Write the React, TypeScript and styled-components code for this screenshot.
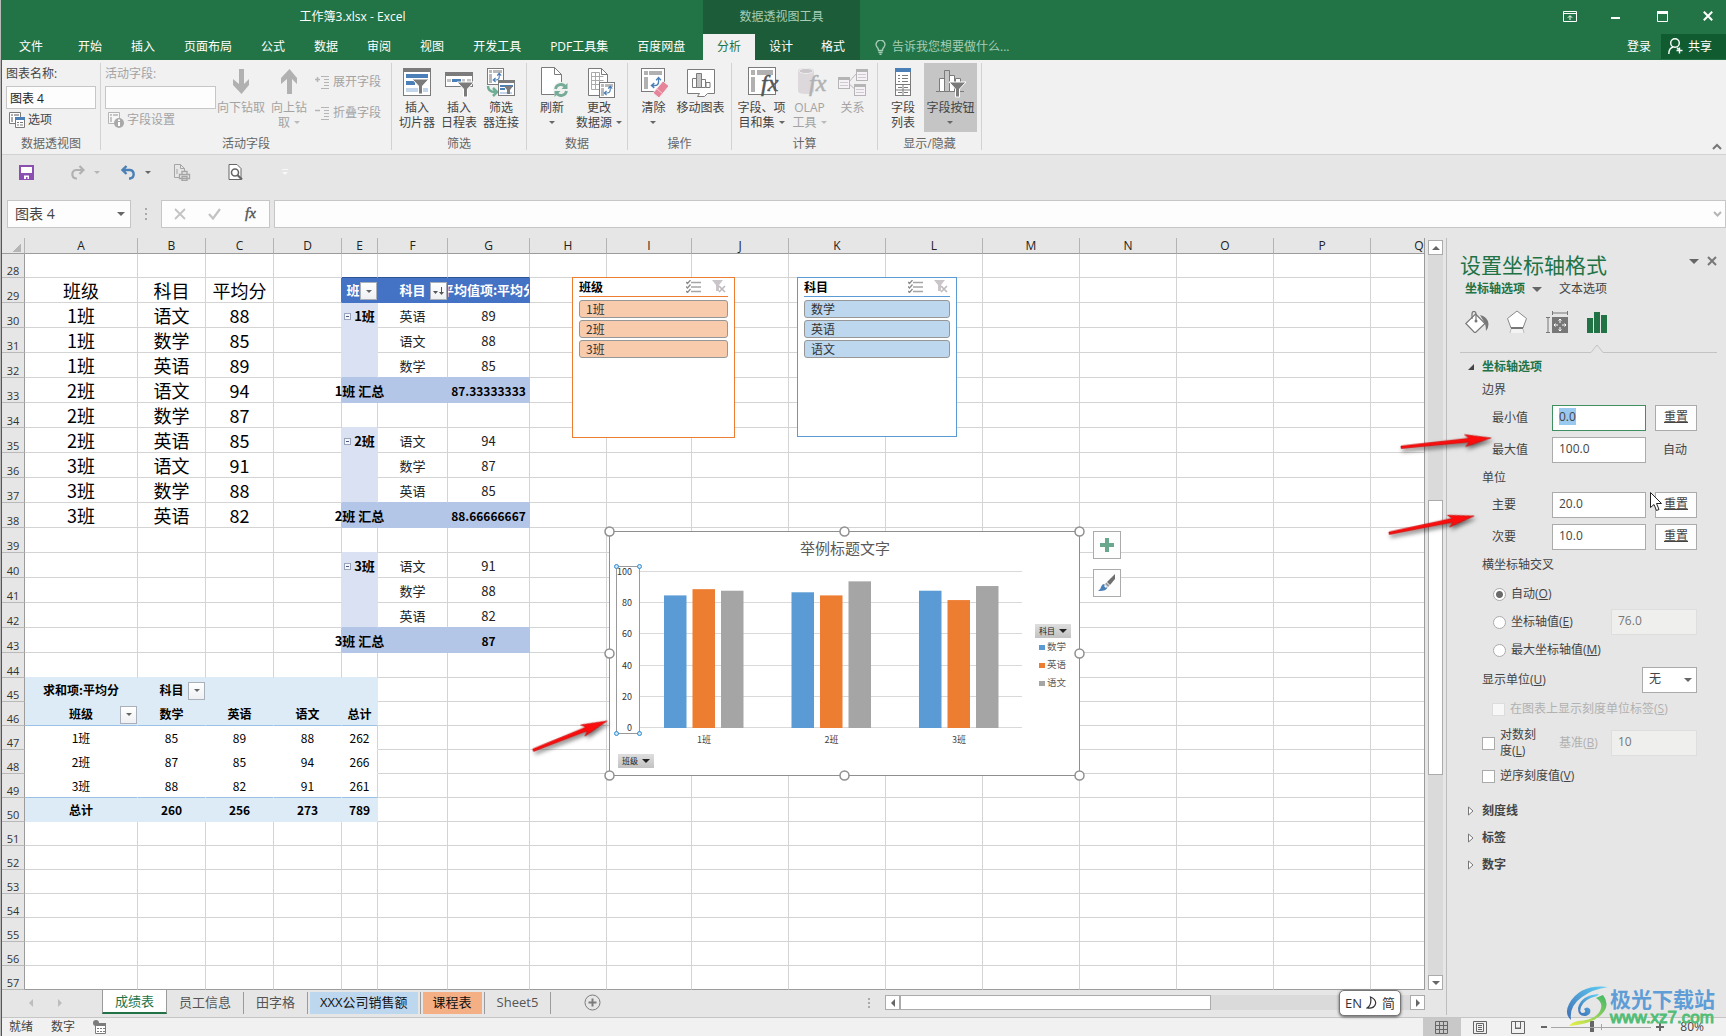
import React, { useEffect, useRef } from 'react';
import styled, { createGlobalStyle, css } from 'styled-components';

const UI_FONT = '"Open Sans", "Noto Sans CJK SC", sans-serif';
const CELL_FONT = '"Noto Sans CJK SC", "Noto Sans", sans-serif';

const C = {
  green: '#227447',
  greenDark: '#1c5c38',
  accent: '#217346',
  ribbon: '#f1f1f1',
  chrome: '#e6e6e6',
  grid: '#d4d4d4',
  headLine: '#9b9b9b',
  text: '#444444',
  muted: '#a3a3a3',
  icon: '#7b7b7b',
  blue: '#4a7fb8',
};

const Global = createGlobalStyle`
  *, *::before, *::after { box-sizing: border-box; }
  body { margin: 0; background: ${C.chrome}; font-family: ${UI_FONT}; font-size: 12px; color: ${C.text}; overflow: hidden; }
  button, input, select { font: inherit; color: inherit; margin: 0; padding: 0; border: 0; border-radius: 0; background: none; outline: none; }
  svg { display: block; flex: none; }
`;

const Window = styled.div`
  position: relative;
  min-height: 100vh;
  display: flex;
  flex-direction: column;
  background: ${C.chrome};
  border-left: 1px solid #b9b9b9;
  line-height: 16px;
`;
const Frame = styled.div`
  flex: 1;
  display: flex;
  flex-direction: column;
  border-left: 1px solid ${C.green};
`;

/* ---------- title and tabs ---------- */
const Header = styled.header`
  display: grid;
  grid-template-columns: 701px 157px 1fr;
  grid-template-rows: 34px 26px;
  background: ${C.green};
  color: #fff;
`;
const Title = styled.div`
  display: flex;
  align-items: center;
  justify-content: center;
`;
const ContextTitle = styled.div`
  display: flex;
  align-items: center;
  justify-content: center;
  background: ${C.greenDark};
  color: #a6cdb6;
`;
const WindowButtons = styled.div`
  display: flex;
  justify-content: flex-end;
  align-items: center;
  gap: 10px;
  padding-bottom: 2px;
`;
const WindowButton = styled.button`
  width: 36px;
  height: 24px;
  display: grid;
  place-items: center;
`;
const TabBar = styled.nav`
  display: flex;
`;
const ContextTabs = styled(TabBar)`
  background: ${C.greenDark};
`;
const Tab = styled.button<{ $file?: boolean; $active?: boolean }>`
  padding: ${p => (p.$file ? '0 21px 0 17px' : '0 15px 0 14px')};
  white-space: nowrap;
  color: ${p => (p.$active ? C.accent : '#fff')};
  background: ${p => (p.$active ? C.ribbon : 'transparent')};
`;
const ContextTab = styled(Tab)`
  padding: 0 14px;
`;
const TabTools = styled.div`
  display: flex;
  align-items: center;
  padding-left: 15px;
  color: #a6cdb6;
`;
const TellMe = styled.button`
  display: flex;
  align-items: center;
  gap: 6px;
`;
const Account = styled.div`
  margin-left: auto;
  display: flex;
  align-self: stretch;
  color: #fff;
`;
const Login = styled.button`
  padding: 0 10px;
`;
const Share = styled.button`
  display: flex;
  align-items: center;
  gap: 5px;
  padding: 0 14px 0 7px;
  margin-bottom: 1px;
  background: #105c30;
`;

/* ---------- ribbon ---------- */
const Ribbon = styled.section`
  display: flex;
  height: 95px;
  padding-top: 3px;
  background: ${C.ribbon};
  border-bottom: 1px solid #d2d2d2;
`;
const GroupBox = styled.div<{ $w: number }>`
  width: ${p => p.$w}px;
  display: flex;
  flex-direction: column;
  margin-bottom: 4px;
  border-right: 1px solid #d2d2d2;
`;
const GroupBody = styled.div`
  flex: 1;
  display: flex;
  justify-content: center;
`;
const GroupLabel = styled.div`
  height: 12px;
  line-height: 12px;
  text-align: center;
  color: #666;
`;
const BigButton = styled.button<{ $w: number; $pressed?: boolean }>`
  width: ${p => p.$w}px;
  height: 69px;
  padding-top: 3px;
  display: flex;
  flex-direction: column;
  align-items: center;
  gap: 2px;
  line-height: 15px;
  white-space: nowrap;
  color: ${C.text};
  background: ${p => (p.$pressed ? '#c5c5c5' : 'transparent')};
  &:disabled { color: ${C.muted}; }
`;
const BigLabel = styled.span`
  display: flex;
  flex-direction: column;
  align-items: center;
`;
const LabelLine = styled.span`
  height: 15px;
  display: flex;
  align-items: center;
  gap: 4px;
`;
const Caret = styled.i<{ $size?: number; $color?: string }>`
  flex: none;
  border: ${p => p.$size ?? 3}px solid transparent;
  border-top-color: ${p => p.$color ?? '#666'};
  border-bottom-width: 0;
`;
const FieldColumn = styled.div<{ $muted?: boolean }>`
  flex: 1;
  display: flex;
  flex-direction: column;
  align-items: flex-start;
  padding: ${p => (p.$muted ? '3px 0 0 4px' : '3px 4px 0 4px')};
  color: ${p => (p.$muted ? C.muted : C.text)};
`;
const FieldLabel = styled.label`
  height: 20px;
  line-height: 16px;
`;
const RibbonInput = styled.input`
  width: 100%;
  height: 23px;
  padding: 0 3px;
  border: 1px solid #c6c6c6;
  background: #fdfdfd;
  color: #222;
`;
const SmallButton = styled.button`
  display: flex;
  align-items: center;
  gap: 3px;
  height: 20px;
  margin: 1px 3px;
  white-space: nowrap;
  &:disabled { color: ${C.muted}; }
`;
const SmallColumn = styled.div`
  width: 79px;
  display: flex;
  flex-direction: column;
  gap: 9px;
  padding-top: 8px;
`;
const Collapse = styled.button`
  margin: auto 4px 4px auto;
`;

/* ---------- quick access and formula bar ---------- */
const QuickBar = styled.div`
  display: flex;
  align-items: center;
  height: 45px;
  padding: 0 0 11px 17px;
`;
const QuickButton = styled.button<{ $w: number }>`
  width: ${p => p.$w}px;
  display: flex;
  align-items: center;
  gap: 9px;
`;
const FormulaBar = styled.div`
  display: flex;
  height: 28px;
  padding-left: 5px;
  margin-bottom: 10px;
  font-size: 14px;
`;
const NameBox = styled.div`
  width: 124px;
  display: flex;
  align-items: center;
  padding-right: 5px;
  border: 1px solid #c6c6c6;
  background: #fdfdfd;
`;
const NameInput = styled.input`
  flex: 1;
  min-width: 0;
  padding-left: 7px;
  color: ${C.text};
`;
const Grip = styled.div`
  width: 30px;
  display: grid;
  place-items: center;
`;
const FormulaButtons = styled.div`
  width: 109px;
  display: flex;
  align-items: center;
  justify-content: space-around;
  padding: 0 1px;
  border: 1px solid #c6c6c6;
  background: #fdfdfd;
`;
const FormulaField = styled.div`
  flex: 1;
  margin-left: 4px;
  display: flex;
  align-items: center;
  padding-right: 3px;
  border: 1px solid #c6c6c6;
  background: #fdfdfd;
`;
const FormulaInput = styled.input`
  flex: 1;
  padding: 0 6px;
`;

/* ---------- sheet ---------- */
const Main = styled.main`
  flex: 1;
  display: flex;
`;
const Workbook = styled.div`
  flex: 1;
  min-width: 0;
  display: flex;
  flex-direction: column;
`;
const SheetRow = styled.div`
  display: flex;
`;
const Sheet = styled.div`
  position: relative;
  flex: 1;
  min-width: 0;
  overflow: hidden;
  background: #fff;
  border-right: 1px solid ${C.headLine};
`;
const Grid = styled.table`
  width: 1423px;
  min-width: 100%;
  table-layout: fixed;
  border-collapse: separate;
  border-spacing: 0;
  font-family: ${CELL_FONT};
  color: #000;
`;
const ColHead = styled.th`
  height: 16px;
  padding: 0;
  font-family: ${UI_FONT};
  font-size: 12px;
  font-weight: 400;
  line-height: 15px;
  color: #222;
  background: ${C.chrome};
  border-right: 1px solid #b4b4b4;
  border-bottom: 1px solid ${C.headLine};
`;
const Corner = styled(ColHead)`
  background: linear-gradient(135deg, ${C.chrome} 50%, #b5b5b5 50%) 10px 5px / 9px 9px no-repeat ${C.chrome};
`;
const RowHead = styled.th<{ $h: number }>`
  height: ${p => p.$h}px;
  padding: 0;
  vertical-align: bottom;
  font-family: ${UI_FONT};
  font-size: 11px;
  font-weight: 400;
  line-height: 12px;
  color: #333;
  background: ${C.chrome};
  border-right: 1px solid ${C.headLine};
  border-bottom: 1px solid #b9b9b9;
`;
type CellLook = { bg?: string; r: string; b: string; low: boolean };
const Cell = styled.td<{ $look: CellLook }>`
  padding: 0;
  line-height: 20px;
  vertical-align: ${p => (p.$look.low ? 'bottom' : 'middle')};
  background: ${p => p.$look.bg ?? 'transparent'};
  border-right: 1px solid ${p => p.$look.r};
  border-bottom: 1px solid ${p => p.$look.b};
`;
const CellText = styled.div<{ $size: number; $bold?: boolean; $color?: string; $clip?: boolean }>`
  display: flex;
  align-items: center;
  justify-content: center;
  gap: 3px;
  height: 22px;
  font-size: ${p => p.$size}px;
  font-weight: ${p => (p.$bold ? 700 : 400)};
  color: ${p => p.$color ?? '#000'};
  white-space: nowrap;
  overflow: ${p => (p.$clip ? 'hidden' : 'visible')};
`;
const Filter = styled.button`
  width: 17px;
  height: 18px;
  display: grid;
  place-items: center;
  border: 1px solid #a9b0ba;
  background: linear-gradient(#fff, #eef0f3);
`;
const FilterSlot = styled.div`
  position: relative;
  height: 22px;
  display: flex;
  align-items: center;
  justify-content: center;
  ${Filter} { position: absolute; right: 0; top: 3px; }
`;
const ExpandBox = styled.button`
  width: 7px;
  height: 7px;
  border: 1px solid #9aa5bd;
  background: linear-gradient(#4a5a80, #4a5a80) center / 3px 1px no-repeat #f4f6fb;
`;

const ScrollV = styled.div`
  width: 21px;
  padding: 2px 3px 0;
  display: flex;
  flex-direction: column;
`;
const ScrollButton = styled.button`
  flex: none;
  width: 15px;
  height: 15px;
  display: grid;
  place-items: center;
  border: 1px solid #ababab;
  background: #fff;
`;
const Track = styled.div<{ $dir: 'row' | 'column' }>`
  flex: 1;
  display: flex;
  flex-direction: ${p => p.$dir};
  background: #dadada;
`;
const Space = styled.div<{ $grow: number }>`
  flex: ${p => p.$grow} 1 0;
`;
const Thumb = styled.div<{ $grow: number }>`
  flex: ${p => p.$grow} 1 0;
  background: #fff;
  border: 1px solid #ababab;
`;

/* ---------- objects floating on the sheet ---------- */
const SlicerBox = styled.section<{ $x: number; $w: number; $h: number; $color: string }>`
  position: absolute;
  left: ${p => p.$x}px;
  top: 39px;
  width: ${p => p.$w}px;
  height: ${p => p.$h}px;
  padding: 0 6px;
  background: #fff;
  border: 1px solid ${p => p.$color};
  display: flex;
  flex-direction: column;
  gap: 2px;
  font-family: ${CELL_FONT};
`;
const SlicerHead = styled.div<{ $color: string }>`
  height: 19px;
  margin-bottom: 1px;
  padding: 0 2px 1px 0;
  display: flex;
  align-items: center;
  gap: 10px;
  font-weight: 700;
  color: #000;
  border-bottom: 1px solid ${p => p.$color};
  svg:first-of-type { margin-left: auto; }
`;
const SlicerItem = styled.button<{ $fill: string }>`
  height: 18px;
  padding: 0 6px;
  text-align: left;
  line-height: 16px;
  color: #333;
  border: 1px solid #979797;
  border-radius: 3px;
  background: ${p => p.$fill};
`;
const ChartBox = styled.figure`
  position: absolute;
  left: 602px;
  top: 288px;
  width: 481px;
  height: 255px;
  margin: 0;
  font-family: ${CELL_FONT};
`;
const ChartField = styled.button<{ $x: number; $y: number }>`
  position: absolute;
  left: ${p => p.$x}px;
  top: ${p => p.$y}px;
  width: 36px;
  height: 14px;
  display: flex;
  align-items: center;
  justify-content: center;
  gap: 4px;
  font-size: 8px;
  color: #222;
  background: linear-gradient(#dedede, #c2c2c2);
`;
const ChartTools = styled.div`
  position: absolute;
  left: 1091px;
  top: 293px;
  display: flex;
  flex-direction: column;
  gap: 10px;
`;
const ChartTool = styled.button`
  width: 28px;
  height: 28px;
  display: grid;
  place-items: center;
  border: 1px solid #ababab;
  background: #fdfdfd;
`;

/* ---------- sheet tabs ---------- */
const TabsRow = styled.div`
  display: flex;
  align-items: center;
  height: 27px;
  padding: 0 21px 2px 0;
  font-size: 13px;
`;
const TabNav = styled.div`
  width: 100px;
  display: flex;
  padding-left: 27px;
  gap: 25px;
`;
const Triangle = styled.i<{ $dir: 'left' | 'right' | 'up' | 'down'; $color?: string }>`
  border: 4px solid transparent;
  ${p => p.$dir === 'left' && css`border-left-width: 0; border-right-color: ${p.$color ?? '#666'};`}
  ${p => p.$dir === 'right' && css`border-right-width: 0; border-left-color: ${p.$color ?? '#666'};`}
  ${p => p.$dir === 'up' && css`border-top-width: 0; border-bottom-color: ${p.$color ?? '#666'};`}
  ${p => p.$dir === 'down' && css`border-bottom-width: 0; border-top-color: ${p.$color ?? '#666'};`}
`;
const SheetTab = styled.button<{ $fill?: string; $active?: boolean }>`
  align-self: flex-start;
  height: 22px;
  margin: 2px 2px 0;
  padding: 0 10px 3px;
  white-space: nowrap;
  background: ${p => p.$fill ?? 'transparent'};
  color: ${p => (p.$fill ? '#111' : '#555')};
  ${p => p.$active && css`
    height: 25px;
    margin: -1px 0 0;
    padding: 0 12px 1px;
    background: #fff;
    color: ${C.accent};
    border: 1px solid ${C.headLine};
    border-top-color: #fff;
    border-bottom: 2px solid ${C.accent};
  `}
`;
const TabRule = styled.span`
  width: 1px;
  height: 22px;
  background: #9b9b9b;
`;
const AddSheet = styled.button`
  margin-left: 33px;
`;
const ScrollH = styled.div`
  margin-left: auto;
  width: 557px;
  display: flex;
  align-items: center;
  ${Track} { height: 15px; }
`;
const Dots = styled.div`
  width: 17px;
`;

/* ---------- format pane ---------- */
const Pane = styled.aside`
  width: 280px;
  display: flex;
  flex-direction: column;
  margin-bottom: 2px;
  padding: 14px 9px 0 13px;
  border-left: 1px solid #bdbdbd;
`;
const PaneTitle = styled.div`
  display: flex;
  align-items: center;
  height: 26px;
`;
const PaneHeading = styled.h2`
  margin: 0;
  flex: 1;
  font-size: 21px;
  font-weight: 400;
  color: ${C.accent};
`;
const PaneTitleButton = styled.button`
  width: 18px;
  height: 18px;
  margin-bottom: 8px;
  display: grid;
  place-items: center end;
`;
const SubTabs = styled.div`
  display: flex;
  align-items: center;
  height: 22px;
  padding-left: 5px;
`;
const SubTab = styled.button<{ $active?: boolean }>`
  display: flex;
  align-items: center;
  gap: 7px;
  padding-right: ${p => (p.$active ? 17 : 0)}px;
  font-weight: ${p => (p.$active ? 700 : 400)};
  color: ${p => (p.$active ? C.accent : C.text)};
`;
const IconTabs = styled.div`
  display: flex;
  height: 44px;
  padding-left: 4px;
  gap: 14px;
`;
const IconTab = styled.button`
  width: 26px;
  display: grid;
  place-items: center;
`;
const Divider = styled.svg`
  width: 100%;
  height: 9px;
`;
const Section = styled.button<{ $open?: boolean; $h: number }>`
  height: ${p => p.$h}px;
  display: flex;
  align-items: center;
  padding-left: 8px;
  gap: 8px;
  font-weight: 700;
  color: ${p => (p.$open ? C.accent : C.text)};
`;
const SectionBody = styled.div`
  display: flex;
  flex-direction: column;
  padding: 0 20px 9px 22px;
`;
const Caption = styled.div<{ $h: number }>`
  height: ${p => p.$h}px;
  line-height: ${p => p.$h}px;
`;
const Fields = styled.div<{ $top?: boolean }>`
  display: grid;
  grid-template-columns: 60px 1fr 42px;
  grid-auto-rows: 26px;
  row-gap: 6px;
  align-items: center;
  padding-left: 10px;
  margin-top: ${p => (p.$top ? 7 : 0)}px;
`;
const TextBox = styled.input`
  width: auto;
  min-width: 0;
  height: 26px;
  margin-right: 9px;
  padding: 0 6px 3px;
  background: #fff;
  border: 1px solid #ababab;
  color: ${C.text};
  &:focus { border-color: #3f8f61; }
  &::selection { background: #9ac9f0; color: ${C.text}; }
  &:disabled { background: #efefed; border-color: #dedede; color: #777; opacity: 1; }
`;
const NarrowBox = styled(TextBox)`
  width: 86px;
  margin: 0 0 0 auto;
`;
const Reset = styled.button`
  height: 26px;
  padding-bottom: 2px;
  border: 1px solid #ababab;
  background: #fdfdfd;
  text-decoration: underline;
  text-underline-offset: 1px;
`;
const Auto = styled.span`
  padding-left: 8px;
`;
const Line = styled.div<{ $h: number; $indent?: number }>`
  display: flex;
  align-items: center;
  height: ${p => p.$h}px;
  padding-left: ${p => p.$indent ?? 0}px;
`;
const Choice = styled.label<{ $off?: boolean; $w?: number }>`
  display: flex;
  align-items: center;
  gap: 5px;
  width: ${p => (p.$w ? `${p.$w}px` : 'auto')};
  white-space: nowrap;
  color: ${p => (p.$off ? '#b1b1b1' : C.text)};
`;
const Radio = styled.input.attrs({ type: 'radio' })`
  appearance: none;
  width: 13px;
  height: 13px;
  border: 1px solid #ababab;
  border-radius: 50%;
  background: #fff;
  &:checked { background: radial-gradient(circle, #6a6a6a 3px, #fff 4px); }
`;
const Check = styled.input.attrs({ type: 'checkbox' })`
  appearance: none;
  flex: none;
  width: 13px;
  height: 13px;
  border: 1px solid #ababab;
  background: #fff;
  &:disabled { border-color: #dcdcdc; background: #f7f7f7; }
`;
const SelectWrap = styled.div`
  position: relative;
  margin-left: auto;
  ${Caret} { position: absolute; right: 5px; top: 11px; }
`;
const Select = styled.select`
  appearance: none;
  width: 55px;
  height: 26px;
  padding: 0 6px 2px;
  border: 1px solid #ababab;
  background: #fff;
`;

/* ---------- status bar ---------- */
const Status = styled.footer`
  display: flex;
  align-items: center;
  height: 19px;
  padding: 0 22px 1px 7px;
  border-top: 1px solid #c6c6c6;
  background: #f1f1f1;
`;
const StatusItem = styled.span`
  margin-right: 18px;
`;
const ViewButtons = styled.div`
  margin-left: auto;
  margin-bottom: -1px;
  display: flex;
  align-self: stretch;
`;
const ViewButton = styled.button<{ $active?: boolean }>`
  width: 38px;
  display: grid;
  place-items: center;
  background: ${p => (p.$active ? '#c8c8c8' : 'transparent')};
`;
const Zoom = styled.div`
  display: flex;
  align-items: center;
  margin-left: 4px;
`;
const ZoomValue = styled.span`
  margin-left: 15px;
`;

/* ---------- floating overlays ---------- */
const Ime = styled.div`
  position: absolute;
  right: 325px;
  bottom: 20px;
  width: 62px;
  height: 26px;
  display: flex;
  align-items: center;
  justify-content: center;
  gap: 4px;
  font-size: 13px;
  color: #333;
  background: #fff;
  border: 1px solid #777;
  border-radius: 5px;
  box-shadow: 0 1px 3px rgba(0, 0, 0, 0.6);
`;
const Watermark = styled.div`
  position: absolute;
  right: 11px;
  bottom: 8px;
  display: flex;
  pointer-events: none;
`;
const WatermarkText = styled.div`
  display: flex;
  flex-direction: column;
  color: #5f9dd6;
  font-size: 21px;
  font-weight: 700;
  line-height: 24px;
  font-family: ${CELL_FONT};
`;
const WatermarkUrl = styled.span`
  font-family: "Liberation Sans", sans-serif;
  font-size: 17px;
  font-weight: 400;
  line-height: 16px;
  color: #52bd77;
  -webkit-text-stroke: 1px #52bd77;
`;
const Pointer = styled.svg<{ $x: number; $y: number }>`
  position: absolute;
  left: ${p => p.$x}px;
  top: ${p => p.$y}px;
  overflow: visible;
  pointer-events: none;
`;

/* ---------- ribbon icons (32px box) ---------- */
const G = C.icon;
const PivotArrow = ({ x, y, s = 1 }: { x: number; y: number; s?: number }) => (
  <g transform={`translate(${x} ${y}) scale(${s})`} stroke={C.blue} strokeWidth="1.4" fill="none">
    <path d="M9 2v4q0 4-4 4H2M6.500 4.500L9 1.500l2.500 3M4.500 7.500L1.500 10l3 2.500" />
  </g>
);
const Funnel = ({ x, y }: { x: number; y: number }) => (
  <path transform={`translate(${x} ${y})`} d="M0 0h17l-6.500 7v8h-4v-8z" fill={G} stroke="#fff" strokeWidth="1" />
);
const Fx = ({ color }: { color: string }) => (
  <text x="15" y="25" fontFamily='"Liberation Serif", serif' fontStyle="italic" fontSize="24" fill={color} stroke={color} strokeWidth="0.500">fx</text>
);
const IconSvg = styled.svg`
  width: 32px;
  height: 32px;
  overflow: visible;
`;
const Box32 = ({ children }: { children: React.ReactNode }) => <IconSvg viewBox="0 0 32 32">{children}</IconSvg>;
const icons: Record<string, React.ReactNode> = {
  down: <Box32><path d="M14 3h5v15l5-5v6l-7.500 9L8 19v-6l6 5z" fill="#b1b1b1" /></Box32>,
  up: <Box32><path d="M14 28h5V13l5 5v-6l-7.500-9L8 12v6l6-5z" fill="#b1b1b1" /></Box32>,
  slicer: (
    <Box32>
      <rect x="2.500" y="2.500" width="27" height="27" fill="#fff" stroke={G} /><path d="M2 2h28v4H2z" fill={G} />
      <path d="M5 8h22v4H5zM5 15h9v4H5z" fill={C.blue} /><path d="M5 22h22v4H5z" fill="#c3d5ea" />
      <Funnel x={11} y={13} />
    </Box32>
  ),
  timeline: (
    <Box32>
      <rect x="2.500" y="6.500" width="27" height="14" fill="#fff" stroke={G} /><path d="M2 6h28v4H2z" fill={G} />
      <path d="M4 13h4v3H4zM19 13h3v3h-3zM24 13h4v3h-4z" fill="#c3c3c3" /><path d="M9 13h9v3H9z" fill={C.blue} />
      <Funnel x={14} y={16} />
    </Box32>
  ),
  connect: (
    <Box32>
      <rect x="2.500" y="2.500" width="16" height="16" fill="#fff" stroke={G} />
      <path d="M4 4h3v3H4zM8 4h9v3H8zM4 8h3v9H4z" fill="#b9b9b9" /><PivotArrow x={7} y={6} s={0.8} />
      <path d="M3 20q0 6 7 6M8 22l4 4-4 4" fill="none" stroke="#6fae95" strokeWidth="2.500" />
      <rect x="13.500" y="14.500" width="16" height="15" fill="#fff" stroke={G} /><path d="M13 14h17v3H13z" fill={G} />
      <path d="M15 19h13v2H15zM15 22h5v2h-5z" fill={C.blue} /><path d="M15 26h12v2H15z" fill="#c3d5ea" />
      <path d="M19 20h9l-3 4v4h-3v-4z" fill={G} />
    </Box32>
  ),
  refresh: (
    <Box32>
      <path d="M5.500 1.500h13l7 7v20h-20z" fill="#fff" stroke={G} /><path d="M18.500 1.500v7h7" fill="none" stroke={G} />
      <circle cx="25" cy="24" r="8" fill={C.ribbon} />
      <g fill="none" stroke="#76ac97" strokeWidth="2.800"><path d="M19.500 23a5.500 5.500 0 0 1 10-2M30.500 25a5.500 5.500 0 0 1-10 2" /></g>
      <path d="M31.500 17v6h-6zM18.500 31v-6h6z" fill="#76ac97" />
    </Box32>
  ),
  source: (
    <Box32>
      <path d="M5.500 2.500h13l6 6v21h-19z" fill="#fff" stroke={G} /><path d="M18.500 2.500v6h6" fill="none" stroke={G} />
      <path d="M8.500 6.500h8v17h-8zM8.500 10.500h12M8.500 14.500h12M8.500 18.500h8M12.500 6.500v17M16.500 10v10" fill="none" stroke="#aaa" />
      <rect x="16.500" y="16.500" width="15" height="15" fill="#fff" stroke={G} /><path d="M18 18h3v3h-3zM22 18h8v3h-8zM18 22h3v8h-3z" fill="#b9b9b9" />
      <PivotArrow x={20} y={19} s={0.8} />
    </Box32>
  ),
  clear: (
    <Box32>
      <rect x="3.500" y="2.500" width="23" height="23" fill="#fff" stroke={G} />
      <path d="M6 5h4v4H6zM11 5h13v4H11zM6 11h4v12H6z" fill="#b1b1b1" /><PivotArrow x={12} y={10} s={0.95} />
      <path d="M25 15l6 5-10 12-6-5z" fill="#e6849a" stroke={C.ribbon} /><path d="M19 23l6 5" stroke="#f6c9d2" />
    </Box32>
  ),
  move: (
    <Box32>
      <path d="M2.500 3.500h27v24h-7l-3 3h-7l2-3h-12z" fill="#fff" stroke={G} />
      <path d="M7.500 12.500h4v9h-4zM16.500 13.500h4v8h-4zM21 16.500h4v5h-4z" fill="#fff" stroke={G} /><path d="M11.500 7.500h5v14h-5z" fill="#c5c5c5" stroke={G} />
    </Box32>
  ),
  fields: (
    <Box32>
      <rect x="2.500" y="1.500" width="27" height="27" fill="#fff" stroke={G} />
      <path d="M5 4h4v5H5zM11 4h16v5H11zM5 11h4v15H5z" fill="#b1b1b1" /><Fx color="#555" />
    </Box32>
  ),
  olap: (
    <Box32>
      <path d="M4 5q0-3 8-3t8 3v20q0 3-8 3t-8-3z" fill="#dcd8dc" /><ellipse cx="12" cy="5" rx="7" ry="2.500" fill="#cbc7cb" stroke="#eee" /><Fx color="#b1b1b1" />
    </Box32>
  ),
  relation: (
    <Box32>
      <path d="M11 17L19 8M11 17l9 8" stroke="#b9b9b9" fill="none" />
      {[[1, 11], [19, 3], [17, 18]].map(([x, y]) => (
        <g key={x}><rect x={x + 0.5} y={y + 0.5} width="11" height="11" fill="#f6f1f6" stroke="#b5b5b5" /><path d={`M${x} ${y}h12v3H${x}z`} fill="#b5b5b5" /><path d={`M${x + 2} ${y + 5.5}h8M${x + 2} ${y + 8.500}h8`} stroke="#ccc" /></g>
      ))}
    </Box32>
  ),
  list: (
    <Box32>
      <rect x="8.500" y="2.500" width="15" height="27" fill="#fff" stroke={G} /><path d="M8 2h16v4H8z" fill={C.blue} />
      <path d="M11 9.500h2M15 9.500h6M11 12.500h2M15 12.500h6M11 15.500h2M15 15.500h6M11 21.500h4M17 21.500h4M11 26.500h4M17 26.500h4M8 18.500h16M8 24h16M16 18v11" stroke={G} />
    </Box32>
  ),
  buttons: (
    <Box32>
      <path d="M1 25.500h28" stroke={G} /><path d="M4.500 12.500h5v13h-5zM14.500 9.500h5v16h-5zM20.500 12.500h5v6h-5z" fill="#fff" stroke={G} /><path d="M9.500 4.500h5v21h-5z" fill="#c5c5c5" stroke={G} />
      <Funnel x={14} y={16} />
    </Box32>
  ),
};

type BigProps = { w: number; icon: string; lines: string[]; caret?: boolean; disabled?: boolean; pressed?: boolean };
const Big = ({ w, icon, lines, caret, disabled, pressed }: BigProps) => (
  <BigButton $w={w} disabled={disabled} $pressed={pressed}>
    {icons[icon]}
    <BigLabel>
      {lines.map((t, i) => (
        <LabelLine key={i}>{t}{caret && i === lines.length - 1 && i > 0 && <Caret $color={disabled ? '#bbb' : undefined} />}</LabelLine>
      ))}
      {caret && lines.length === 1 && <LabelLine><Caret /></LabelLine>}
    </BigLabel>
  </BigButton>
);
const Group = ({ w, label, children }: { w: number; label: string; children: React.ReactNode }) => (
  <GroupBox $w={w}><GroupBody>{children}</GroupBody><GroupLabel>{label}</GroupLabel></GroupBox>
);

/* ---------- sheet data ---------- */
const COLS: [string, number][] = [
  ['A', 113], ['B', 68], ['C', 68], ['D', 68], ['E', 36], ['F', 70], ['G', 82], ['H', 77], ['I', 85],
  ['J', 97], ['K', 97], ['L', 97], ['M', 97], ['N', 97], ['O', 97], ['P', 97], ['Q', 97],
];
const ROWS = Array.from({ length: 30 }, (_, i) => 28 + i);
const SCORES = [
  ['班级', '科目', '平均分'], ['1班', '语文', '88'], ['1班', '数学', '85'], ['1班', '英语', '89'], ['2班', '语文', '94'],
  ['2班', '数学', '87'], ['2班', '英语', '85'], ['3班', '语文', '91'], ['3班', '数学', '88'], ['3班', '英语', '82'],
];
const PIVOT: Record<number, [string, string, string]> = {
  30: ['1班', '英语', '89'], 31: ['', '语文', '88'], 32: ['', '数学', '85'], 33: ['1班 汇总', '', '87.33333333'],
  35: ['2班', '语文', '94'], 36: ['', '数学', '87'], 37: ['', '英语', '85'], 38: ['2班 汇总', '', '88.66666667'],
  40: ['3班', '语文', '91'], 41: ['', '数学', '88'], 42: ['', '英语', '82'], 43: ['3班 汇总', '', '87'],
};
const CROSS: Record<number, string[]> = {
  45: ['求和项:平均分', '科目', '', '', ''], 46: ['班级', '数学', '英语', '语文', '总计'],
  47: ['1班', '85', '89', '88', '262'], 48: ['2班', '87', '85', '94', '266'], 49: ['3班', '88', '82', '91', '261'],
  50: ['总计', '260', '256', '273', '789'],
};
const fillOf = (r: number, c: number): string | undefined => {
  if (r >= 45 && r <= 50 && c <= 4) return r >= 47 && r <= 49 ? '#ffffff' : '#ddebf7';
  if (c >= 4 && c <= 6) {
    if (r === 29) return '#4472c4';
    if (r === 33 || r === 38 || r === 43) return '#b4c6e7';
    if (c === 4 && PIVOT[r]) return '#d9e1f2';
  }
  return undefined;
};
const lookOf = (r: number, c: number): CellLook => {
  const bg = fillOf(r, c);
  const below = fillOf(r + 1, c);
  const right = fillOf(r, c + 1);
  let b = r === 29 ? bg ?? C.grid : below ?? bg ?? C.grid;
  if (r === 28 && c >= 4 && c <= 6) b = '#2f5597';
  if ((r === 46 || r === 49) && c <= 4) b = '#9bc2e6';
  if (r === 57) b = C.headLine;
  const edge = r >= 47 && r <= 49 && c === 4;
  return { bg, r: edge ? C.grid : right ?? bg ?? C.grid, b, low: c >= 4 && r >= 30 && r < 45 };
};
const contentOf = (r: number, c: number): React.ReactNode => {
  if (c < 3 && r >= 29 && r <= 38) return <CellText $size={18}>{SCORES[r - 29][c]}</CellText>;
  if (CROSS[r] && c <= 4) {
    const t = CROSS[r][c];
    if (!t) return null;
    const text = <CellText $size={12} $bold={r < 47 || r === 50}>{t}</CellText>;
    if ((r === 45 && c === 1) || (r === 46 && c === 0)) return <FilterSlot>{text}<Filter aria-label="筛选"><Caret /></Filter></FilterSlot>;
    return text;
  }
  if (r === 29 && c === 4) return <FilterSlot><CellText $size={13} $bold $color="#fff" $clip>班级</CellText><Filter aria-label="筛选"><Caret /></Filter></FilterSlot>;
  if (r === 29 && c === 5) {
    return (
      <FilterSlot><CellText $size={13} $bold $color="#fff">科目</CellText>
        <Filter aria-label="排序"><svg width="11" height="10"><path d="M0 5h5L2.500 8z" fill="#555" /><path d="M8.500 1v5" stroke="#555" /><path d="M6 6h5L8.500 9z" fill="#555" /></svg></Filter>
      </FilterSlot>
    );
  }
  if (r === 29 && c === 6) return <CellText $size={13} $bold $color="#fff" $clip>平均值项:平均分</CellText>;
  const p = PIVOT[r];
  if (p && c >= 4 && c <= 6) {
    const total = !p[1];
    if (c === 4 && p[0] && !total) return <CellText $size={13} $bold><ExpandBox aria-label="折叠" />{p[0]}</CellText>;
    return p[c - 4] ? <CellText $size={total && c === 6 ? 12 : 13} $bold={total} $color={total ? '#000' : '#222'}>{p[c - 4]}</CellText> : null;
  }
  return null;
};

const Slicer = ({ x, w, h, color, fill, title, items }: { x: number; w: number; h: number; color: string; fill: string; title: string; items: string[] }) => (
  <SlicerBox $x={x} $w={w} $h={h} $color={color}>
    <SlicerHead $color={color}>
      {title}
      <svg width="15" height="13" fill="none" stroke="#8c8c8c"><path d="M5 2.500h10M5 7h10M5 11.500h10" stroke="#a5a5a5" strokeWidth="1.500" /><path d="M0 2l1.500 1.500L4.500 0M0 6.500L1.500 8l3-3.500M0 11l1.500 1.500L4.500 9" strokeWidth="1.300" /></svg>
      <svg width="15" height="13"><path d="M1 0h11L8 5v6H5V5z" fill="#c9c5c9" /><path d="M8 6l6 6M14 6l-6 6" stroke="#bcb8bc" strokeWidth="1.600" /></svg>
    </SlicerHead>
    {items.map(t => <SlicerItem key={t} $fill={fill}>{t}</SlicerItem>)}
  </SlicerBox>
);

/* ---------- chart ---------- */
const SERIES = [
  { name: '数学', color: '#5b9bd5', values: [85, 87, 88] },
  { name: '英语', color: '#ed7d31', values: [89, 85, 82] },
  { name: '语文', color: '#a5a5a5', values: [88, 94, 91] },
];
const Chart = () => {
  const base = 202;
  const left = 36;
  return (
    <ChartBox>
      <svg width="481" height="255" viewBox="0 0 481 255">
        <rect x="5.500" y="5.500" width="470" height="244" fill="#fff" stroke="#8f8f8f" />
        <text x="241" y="28" fontSize="15" textAnchor="middle" fill="#595959">举例标题文字</text>
        {[0, 20, 40, 60, 80, 100].map(v => (
          <g key={v}>
            <path d={`M${left} ${base - Math.round(v * 1.56) - 0.5}H418`} stroke="#d9d9d9" />
            <text x="28" y={base - Math.round(v * 1.56) + 3} fontSize="9" textAnchor="end" fill="#333">{v}</text>
          </g>
        ))}
        {SERIES.map((s, i) => s.values.map((v, g) => (
          <rect key={`${i}${g}`} x={60 + i * 28.5 + g * 127.5} y={base - v * 1.56} width="22.500" height={v * 1.56} fill={s.color} />
        )))}
        {['1班', '2班', '3班'].map((t, g) => <text key={t} x={100 + g * 127.5} y="217" fontSize="9" textAnchor="middle" fill="#444">{t}</text>)}
        {SERIES.map((s, i) => (
          <g key={s.name}><rect x="435" y={119 + i * 18} width="6" height="5" fill={s.color} /><text x="443" y={124 + i * 18} fontSize="9.500" fill="#595959">{s.name}</text></g>
        ))}
        <rect x="12.500" y="40.500" width="23" height="167" fill="none" stroke="#9a9a9a" />
        {[[12.5, 40.5], [35.5, 40.5], [12.5, 207.5], [35.5, 207.5]].map(([x, y]) => <circle key={`${x}-${y}`} cx={x} cy={y} r="2" fill="#cde6fa" stroke="#2a8dd4" />)}
        {[5.5, 240.5, 475.5].flatMap(x => [5.5, 127.5, 249.5].map(y => (
          x === 240.5 && y === 127.5 ? null : <circle key={`${x}-${y}`} cx={x} cy={y} r="4.500" fill="#fff" stroke="#8f8f8f" strokeWidth="1.500" />
        )))}
      </svg>
      <ChartField $x={431} $y={98}>科目<Caret $size={4} $color="#222" /></ChartField>
      <ChartField $x={14} $y={228}>班级<Caret $size={4} $color="#222" /></ChartField>
    </ChartBox>
  );
};

const ArrowShape = styled.g`
  filter: drop-shadow(1px 3px 2px rgba(0, 0, 0, 0.55));
`;
const Arrow = ({ x1, y1, x2, y2 }: { x1: number; y1: number; x2: number; y2: number }) => {
  const len = Math.hypot(x2 - x1, y2 - y1);
  const angle = (Math.atan2(y2 - y1, x2 - x1) * 180) / Math.PI;
  return (
    <Pointer $x={x1} $y={y1} width="10" height="10">
      <ArrowShape transform={`rotate(${angle})`}>
        <path d={`M0 -1L${len - 22} -2L${len - 26} -6L${len} 0L${len - 26} 6L${len - 22} 2L0 1.500z`} fill="#fb0d0d" stroke="#c50000" strokeWidth="0.600" />
      </ArrowShape>
    </Pointer>
  );
};

const MAIN_TABS = ['文件', '开始', '插入', '页面布局', '公式', '数据', '审阅', '视图', '开发工具', 'PDF工具集', '百度网盘'];

const Key = ({ k }: { k: string }) => <span>(<u>{k}</u>)</span>;

export default function App() {
  const minRef = useRef<HTMLInputElement>(null);
  useEffect(() => {
    minRef.current?.focus();
    minRef.current?.select();
  }, []);

  return (
    <Window>
      <Global />
      <Frame>
        <Header>
          <Title>工作簿3.xlsx - Excel</Title>
          <ContextTitle>数据透视图工具</ContextTitle>
          <WindowButtons>
            <WindowButton aria-label="功能区显示选项"><svg width="14" height="11" fill="none" stroke="#fff"><path d="M.5.500h13v10H.5zM1 2.500h12M7 9V5M4.800 6.800L7 4.600l2.200 2.200" /></svg></WindowButton>
            <WindowButton aria-label="最小化"><svg width="10" height="10"><path d="M0 6h9v2H0z" fill="#fff" /></svg></WindowButton>
            <WindowButton aria-label="最大化"><svg width="11" height="11"><path d="M.5.500h10v10H.5z" fill="none" stroke="#fff" /><path d="M0 0h11v3H0z" fill="#fff" /></svg></WindowButton>
            <WindowButton aria-label="关闭"><svg width="10" height="10"><path d="M.8.800l8.400 8.400M9.200.800L.8 9.200" stroke="#fff" strokeWidth="2" /></svg></WindowButton>
          </WindowButtons>
          <TabBar>{MAIN_TABS.map((t, i) => <Tab key={t} $file={i === 0}>{t}</Tab>)}</TabBar>
          <ContextTabs>
            <ContextTab $active>分析</ContextTab>
            <ContextTab>设计</ContextTab>
            <ContextTab>格式</ContextTab>
          </ContextTabs>
          <TabTools>
            <TellMe>
              <svg width="11" height="15" fill="none" stroke="#a6cdb6" strokeWidth="1.300"><path d="M3.500 10.500q0-2-1.500-3.500a4.300 4.300 0 1 1 7 0q-1.500 1.500-1.500 3.500zM3.500 12.500h4M4.500 14.300h2" /></svg>
              告诉我您想要做什么...
            </TellMe>
            <Account>
              <Login>登录</Login>
              <Share>
                <svg width="15" height="17" fill="none" stroke="#fff" strokeWidth="1.400"><circle cx="7" cy="5" r="4.300" /><path d="M.8 16q0-6 4.500-7M9 10q1 .5 1.500 1.500M11.500 9.500v6M8.500 12.500h6" /></svg>
                共享
              </Share>
            </Account>
          </TabTools>
        </Header>

        <Ribbon>
          <Group w={99} label="数据透视图">
            <FieldColumn>
              <FieldLabel htmlFor="chart-name">图表名称:</FieldLabel>
              <RibbonInput id="chart-name" defaultValue="图表 4" />
              <SmallButton>
                <svg width="16" height="16"><path d="M.5.500h11v11H.5z" fill="#fff" stroke={G} /><path d="M2 2h2v2H2zM5 2h5v2H5zM2 5h2v5H2z" fill="#aaa" /><path d="M6.500 5.500h9v10h-9z" fill="#fff" stroke={G} /><path d="M6 5h10v3H6z" fill={C.blue} /><path d="M8 10.500h2M11 10.500h3M8 13h2M11 13h3" stroke={G} /></svg>
                选项
              </SmallButton>
            </FieldColumn>
          </Group>
          <Group w={291} label="活动字段">
            <FieldColumn $muted>
              <FieldLabel htmlFor="active-field">活动字段:</FieldLabel>
              <RibbonInput id="active-field" />
              <SmallButton disabled>
                <svg width="16" height="16"><path d="M.5.500h11v11H.5z" fill="#f7f7f7" stroke="#b5b5b5" /><path d="M2 2h2v2H2zM5 2h5v2H5zM2 5h2v5H2z" fill="#c5c5c5" /><circle cx="11" cy="11" r="5" fill="#a9a9a9" /><path d="M10 10h2v4h-2zM10 7.500h2v1.500h-2z" fill="#fff" /></svg>
                字段设置
              </SmallButton>
            </FieldColumn>
            <Big w={50} icon="down" lines={['向下钻取']} disabled />
            <Big w={46} icon="up" lines={['向上钻', '取']} caret disabled />
            <SmallColumn>
              {['展开字段', '折叠字段'].map((t, i) => (
                <SmallButton key={t} disabled>
                  <svg width="15" height="14" stroke="#b5b5b5" fill="none"><path d={i ? 'M0 4.500h5' : 'M0 4.500h5M2.500 2v5'} strokeWidth="1.500" /><path d="M6 1.500h8M9 4.500h5M9 7.500h5M9 10.500h5M6 13.500h8" /></svg>
                  {t}
                </SmallButton>
              ))}
            </SmallColumn>
          </Group>
          <Group w={135} label="筛选">
            <Big w={42} icon="slicer" lines={['插入', '切片器']} />
            <Big w={42} icon="timeline" lines={['插入', '日程表']} />
            <Big w={42} icon="connect" lines={['筛选', '器连接']} />
          </Group>
          <Group w={101} label="数据">
            <Big w={44} icon="refresh" lines={['刷新']} caret />
            <Big w={50} icon="source" lines={['更改', '数据源']} caret />
          </Group>
          <Group w={104} label="操作">
            <Big w={42} icon="clear" lines={['清除']} caret />
            <Big w={52} icon="move" lines={['移动图表']} />
          </Group>
          <Group w={146} label="计算">
            <Big w={54} icon="fields" lines={['字段、项', '目和集']} caret />
            <Big w={42} icon="olap" lines={['OLAP', '工具']} caret disabled />
            <Big w={44} icon="relation" lines={['关系']} disabled />
          </Group>
          <Group w={104} label="显示/隐藏">
            <Big w={42} icon="list" lines={['字段', '列表']} />
            <Big w={53} icon="buttons" lines={['字段按钮']} caret pressed />
          </Group>
          <Collapse aria-label="折叠功能区"><svg width="10" height="7"><path d="M1 6l4-4 4 4" fill="none" stroke="#777" strokeWidth="2" /></svg></Collapse>
        </Ribbon>

        <QuickBar>
          <QuickButton $w={51} aria-label="保存"><svg width="15" height="15"><path d="M1 1h13v13H1z" fill="#fff" stroke="#8a4fb0" strokeWidth="2" /><path d="M1 8h13v6H1z" fill="#8a4fb0" /><path d="M5 10.500h5V14H8.500v-2H7v2H5z" fill="#fff" /></svg></QuickButton>
          <QuickButton $w={51} aria-label="恢复"><svg width="15" height="15" fill="none" stroke="#b1b1b1" strokeWidth="2.200"><path d="M13 5H6a4.300 4.300 0 0 0 0 8.500h1M9.500 1l4 4-4 4" /></svg><Caret $color="#b5b5b5" /></QuickButton>
          <QuickButton $w={53} aria-label="撤消"><svg width="15" height="15" fill="none" stroke={C.blue} strokeWidth="2.400"><path d="M2 5h7a4.300 4.300 0 0 1 0 8.500H8M5.500 1l-4 4 4 4" /></svg><Caret /></QuickButton>
          <QuickButton $w={54} aria-label="快速打印"><svg width="17" height="17" fill="none" stroke="#a5a5a5"><path d="M5 13.500H.5V.500h6l4 4v3M6.500.500v4h4M3 5v5" /><path d="M5.500 10.500h10v4h-10zM8 7.500h5v3H8zM8 12.500h5v4H8z" fill="#eee" strokeWidth="1.300" /></svg></QuickButton>
          <QuickButton $w={54} aria-label="打印预览"><svg width="15" height="16" fill="none" stroke="#666"><path d="M1 .500h8l4 4v11H1z" fill="#fff" /><circle cx="7" cy="8.500" r="3.500" fill="#fff" strokeWidth="1.600" /><path d="M9.500 11l4.500 4.500" strokeWidth="2.200" /></svg></QuickButton>
          <QuickButton $w={20} aria-label="自定义"><svg width="6" height="7"><path d="M0 0h6v1H0zM0 3h6L3 6z" fill="#f8f8f8" /></svg></QuickButton>
        </QuickBar>

        <FormulaBar>
          <NameBox><NameInput aria-label="名称框" defaultValue="图表 4" /><Caret $size={4} /></NameBox>
          <Grip><svg width="2" height="12"><path d="M0 0h2v2H0zM0 5h2v2H0zM0 10h2v2H0z" fill="#aaa" /></svg></Grip>
          <FormulaButtons>
            <button aria-label="取消"><svg width="12" height="12"><path d="M1 1l10 10M11 1L1 11" stroke="#c3c3c3" strokeWidth="1.800" /></svg></button>
            <button aria-label="输入"><svg width="13" height="12"><path d="M1 6l4 4.500L12 1" fill="none" stroke="#c3c3c3" strokeWidth="2.200" /></svg></button>
            <button aria-label="插入函数"><svg width="14" height="16"><text x="2" y="12" fontFamily='"Liberation Serif", serif' fontStyle="italic" fontSize="15" fill="#555" stroke="#555" strokeWidth="0.400">fx</text></svg></button>
          </FormulaButtons>
          <FormulaField><FormulaInput aria-label="编辑栏" /><svg width="9" height="6"><path d="M1 1l3.500 3.500L8 1" fill="none" stroke="#b5b5b5" strokeWidth="2" /></svg></FormulaField>
        </FormulaBar>

        <Main>
          <Workbook>
            <SheetRow>
              <Sheet>
                <Grid>
                  <colgroup><col width={23} />{COLS.map(([n, w]) => <col key={n} width={w} />)}</colgroup>
                  <thead><tr><Corner aria-label="全选" />{COLS.map(([n]) => <ColHead key={n}>{n}</ColHead>)}</tr></thead>
                  <tbody>
                    {ROWS.map(r => (
                      <tr key={r}>
                        <RowHead $h={r === 28 || r > 44 ? 24 : 25}>{r}</RowHead>
                        {COLS.map(([n], c) => <Cell key={n} $look={lookOf(r, c)}>{contentOf(r, c)}</Cell>)}
                      </tr>
                    ))}
                  </tbody>
                </Grid>
                <Slicer x={570} w={163} h={161} color="#ed7d31" fill="#f8cbad" title="班级" items={['1班', '2班', '3班']} />
                <Slicer x={795} w={160} h={160} color="#5b9bd5" fill="#bdd7ee" title="科目" items={['数学', '英语', '语文']} />
                <Chart />
                <ChartTools>
                  <ChartTool aria-label="图表元素"><svg width="14" height="14"><path d="M5 0h4v5h5v4H9v5H5V9H0V5h5z" fill="#69a88d" /></svg></ChartTool>
                  <ChartTool aria-label="图表样式"><svg width="18" height="18"><path d="M17 0v5l-5 6-3-3z" fill="#6f6f6f" /><path d="M8.500 8.500l3 3-1.500 1.500-3-3z" fill="#999" /><path d="M6 10l3.500 3.500Q8 17.500 0 17q3-2 3-4 1-3 3-3z" fill={C.blue} /><path d="M6.500 11.500l2 2" stroke="#fff" strokeWidth="1.500" /></svg></ChartTool>
                </ChartTools>
              </Sheet>
              <ScrollV>
                <ScrollButton aria-label="向上滚动"><Triangle $dir="up" /></ScrollButton>
                <Track $dir="column"><Space $grow={246} /><Thumb $grow={273} /><Space $grow={201} /></Track>
                <ScrollButton aria-label="向下滚动"><Triangle $dir="down" /></ScrollButton>
              </ScrollV>
            </SheetRow>
            <TabsRow>
              <TabNav><Triangle $dir="left" $color="#bdbdbd" /><Triangle $dir="right" $color="#bdbdbd" /></TabNav>
              <SheetTab $active>成绩表</SheetTab>
              <SheetTab>员工信息</SheetTab><TabRule />
              <SheetTab>田字格</SheetTab><TabRule />
              <SheetTab $fill="#bdd7ee">XXX公司销售额</SheetTab><TabRule />
              <SheetTab $fill="#f4b084">课程表</SheetTab><TabRule />
              <SheetTab>Sheet5</SheetTab><TabRule />
              <AddSheet aria-label="新工作表"><svg width="17" height="17" fill="none" stroke="#7b7b7b"><circle cx="8.500" cy="8.500" r="7.500" /><path d="M8.500 4.500v8M4.500 8.500h8" strokeWidth="2" /></svg></AddSheet>
              <ScrollH>
                <Dots><svg width="2" height="10"><path d="M0 0h2v2H0zM0 4h2v2H0zM0 8h2v2H0z" fill="#aaa" /></svg></Dots>
                <ScrollButton aria-label="向左滚动"><Triangle $dir="left" /></ScrollButton>
                <Track $dir="row"><Thumb $grow={310} /><Space $grow={200} /></Track>
                <ScrollButton aria-label="向右滚动"><Triangle $dir="right" /></ScrollButton>
              </ScrollH>
            </TabsRow>
          </Workbook>

          <Pane>
            <PaneTitle>
              <PaneHeading>设置坐标轴格式</PaneHeading>
              <PaneTitleButton aria-label="窗格选项"><Caret $size={5} /></PaneTitleButton>
              <PaneTitleButton aria-label="关闭窗格"><svg width="10" height="10"><path d="M1 1l8 8M9 1L1 9" stroke="#777" strokeWidth="2" /></svg></PaneTitleButton>
            </PaneTitle>
            <SubTabs>
              <SubTab $active>坐标轴选项<Caret $size={5} /></SubTab>
              <SubTab>文本选项</SubTab>
            </SubTabs>
            <IconTabs>
              <IconTab aria-label="填充与线条"><svg width="24" height="22"><path d="M10.500 3L20 12.500 10 22 .8 12.500z" fill="#fff" stroke="#777" strokeWidth="1.200" /><path d="M7 8V3q0-2.500 2-2.500T11 3v7" fill="none" stroke="#777" strokeWidth="1.200" /><circle cx="11" cy="10" r="1.500" fill="#777" /><path d="M15 4q8 2 8.500 9 0 4-2.500 7 0-4-1-7.500z" fill="#777" /></svg></IconTab>
              <IconTab aria-label="效果"><svg width="22" height="24"><path d="M11 1l9.500 7.500L17 18H5L1.500 8.500z" fill="#fff" stroke="#888" /><path d="M5 18h12" stroke="#777" strokeWidth="2" /><path d="M5 19h12l1.500 4H3.500z" fill="#f3f3f3" /><path d="M5 19l-1 4M17 19l1 4" stroke="#bbb" /></svg></IconTab>
              <IconTab aria-label="大小与属性"><svg width="22" height="22"><path d="M6 6h16v16H6z" fill="#777" /><path d="M6.500 0v4M21.500 0v4M7 2h14M0 6.500h4M0 21.500h4M2 7v14" stroke="#777" fill="none" /><path d="M14 8v4M14 16v4M8 14h4M16 14h4M12.500 9.500L14 8l1.500 1.500M12.500 18.500L14 20l1.500-1.500M9.500 12.500L8 14l1.500 1.500M18.500 12.500L20 14l-1.500 1.500" stroke="#fff" fill="none" /></svg></IconTab>
              <IconTab aria-label="坐标轴选项"><svg width="20" height="22"><path d="M0 7h6v15H0zM7 1h6v21H7zM14 4h6v18h-6z" fill={C.accent} /></svg></IconTab>
            </IconTabs>
            <Divider><path d="M0 8.500H131L137 1L143 8.500H2000" fill="none" stroke="#c3c3c3" /></Divider>
            <Section $open $h={28}><svg width="6" height="6"><path d="M6 0v6H0z" fill="#444" /></svg>坐标轴选项</Section>
            <SectionBody>
              <Caption $h={17}>边界</Caption>
              <Fields $top>
                <label htmlFor="min">最小值</label><TextBox id="min" ref={minRef} defaultValue="0.0" /><Reset>重置</Reset>
                <label htmlFor="max">最大值</label><TextBox id="max" defaultValue="100.0" /><Auto>自动</Auto>
              </Fields>
              <Caption $h={29}>单位</Caption>
              <Fields>
                <label htmlFor="major">主要</label><TextBox id="major" defaultValue="20.0" /><Reset>重置</Reset>
                <label htmlFor="minor">次要</label><TextBox id="minor" defaultValue="10.0" /><Reset>重置</Reset>
              </Fields>
              <Caption $h={30}>横坐标轴交叉</Caption>
              <Line $h={28} $indent={11}><Choice><Radio name="cross" defaultChecked /><span>自动<Key k="O" /></span></Choice></Line>
              <Line $h={28} $indent={11}><Choice><Radio name="cross" /><span>坐标轴值<Key k="E" /></span></Choice><NarrowBox aria-label="坐标轴值" disabled defaultValue="76.0" /></Line>
              <Line $h={28} $indent={11}><Choice><Radio name="cross" /><span>最大坐标轴值<Key k="M" /></span></Choice></Line>
              <Line $h={32}><label htmlFor="unit">显示单位<Key k="U" /></label><SelectWrap><Select id="unit"><option>无</option></Select><Caret $size={4} /></SelectWrap></Line>
              <Line $h={26} $indent={10}><Choice $off><Check disabled /><span>在图表上显示刻度单位标签<Key k="S" /></span></Choice></Line>
              <Line $h={42}>
                <Choice $w={77}><Check /><span>对数刻<br />度<Key k="L" /></span></Choice>
                <Choice $off htmlFor="base"><span>基准<Key k="B" /></span></Choice>
                <NarrowBox id="base" disabled defaultValue="10" />
              </Line>
              <Line $h={24}><Choice><Check /><span>逆序刻度值<Key k="V" /></span></Choice></Line>
            </SectionBody>
            {['刻度线', '标签', '数字'].map(t => (
              <Section key={t} $h={27}><svg width="6" height="10"><path d="M.5 1v8l4.500-4z" fill="#fff" stroke="#777" /></svg>{t}</Section>
            ))}
          </Pane>
        </Main>

        <Status>
          <StatusItem>就绪</StatusItem>
          <StatusItem>数字</StatusItem>
          <svg width="13" height="14"><path d="M2.500 3.500h10v10h-10z" fill="#fff" stroke={G} /><path d="M4 3h9v3H4z" fill={G} /><path d="M4 8.500h2M7 8.500h2M10 8.500h2M4 11.500h2M7 11.500h2M10 11.500h2" stroke={G} /><circle cx="3" cy="3" r="3" fill={G} /></svg>
          <ViewButtons>
            <ViewButton $active aria-label="普通"><svg width="14" height="13" fill="none" stroke="#666"><path d="M.5.500h12v12H.5zM4.500 0v13M8.500 0v13M0 4.500h13M0 8.500h13" /></svg></ViewButton>
            <ViewButton aria-label="页面布局"><svg width="14" height="13" fill="none" stroke="#666"><path d="M.5.500h13v12H.5zM3.500 2.500h7v8h-7zM5 4.500h4M5 6.500h4M5 8.500h4" /></svg></ViewButton>
            <ViewButton aria-label="分页预览"><svg width="14" height="13" fill="none" stroke="#666"><path d="M.5.500h13v12H.5zM4.500 0v7h5V0M4 7.500h6" /></svg></ViewButton>
          </ViewButtons>
          <Zoom>
            <svg width="124" height="14"><path d="M0 6h6v2H0zM115 6h8v2h-8zM118 3h2v8h-2zM49 1h4v11h-4z" fill="#666" /><path d="M10 7.500h100M60.500 4v6" stroke="#a5a5a5" /></svg>
            <ZoomValue>80%</ZoomValue>
          </Zoom>
        </Status>
      </Frame>

      <Ime>
        <span>EN</span>
        <svg width="12" height="14"><path d="M4.500 1q6 2.500 5 7-1.500 5-8.500 4 5-3 3.500-11z" fill="none" stroke="#333" strokeWidth="1.200" /></svg>
        <span>简</span>
      </Ime>
      <Arrow x1={1400} y1={447} x2={1490} y2={438} />
      <Arrow x1={1388} y1={533} x2={1473} y2={516} />
      <Arrow x1={532} y1={750} x2={606} y2={721} />
      <Pointer $x={1649} $y={492} width="13" height="20"><path d="M.5.500v15l3.500-3 2.500 6 2.500-1-2.500-6h5z" fill="#fff" stroke="#222" /></Pointer>
      <Watermark>
        <svg width="45" height="42" viewBox="0 0 45 42">
          <defs>
            <linearGradient id="wb" x1="0" y1="1" x2="1" y2="0"><stop offset="0" stopColor="#3f6fb5" /><stop offset="1" stopColor="#5fd0f5" /></linearGradient>
            <linearGradient id="wg" x1="0" y1="1" x2="1" y2="0"><stop offset="0" stopColor="#eef04a" /><stop offset="1" stopColor="#3fb56a" /></linearGradient>
          </defs>
          <path d="M43 1Q15-2 4 18q-5 10 2 16Q4 20 17 11 28 3 43 1z" fill="url(#wb)" />
          <path d="M38 9q8 10-2 20-9 9-32 11 3-4 9-5 17-1 22-10 4-8-4-13 4-2 7-3z" fill="url(#wg)" />
          <path d="M34 8Q16 9 13 22q0 9 8 8 6-2 4-7-3-3-6 0 3 3-1 4-4 0-2-6 3-8 16-11z" fill="url(#wb)" />
        </svg>
        <WatermarkText>极光下载站<WatermarkUrl>www.xz7.com</WatermarkUrl></WatermarkText>
      </Watermark>
    </Window>
  );
}
